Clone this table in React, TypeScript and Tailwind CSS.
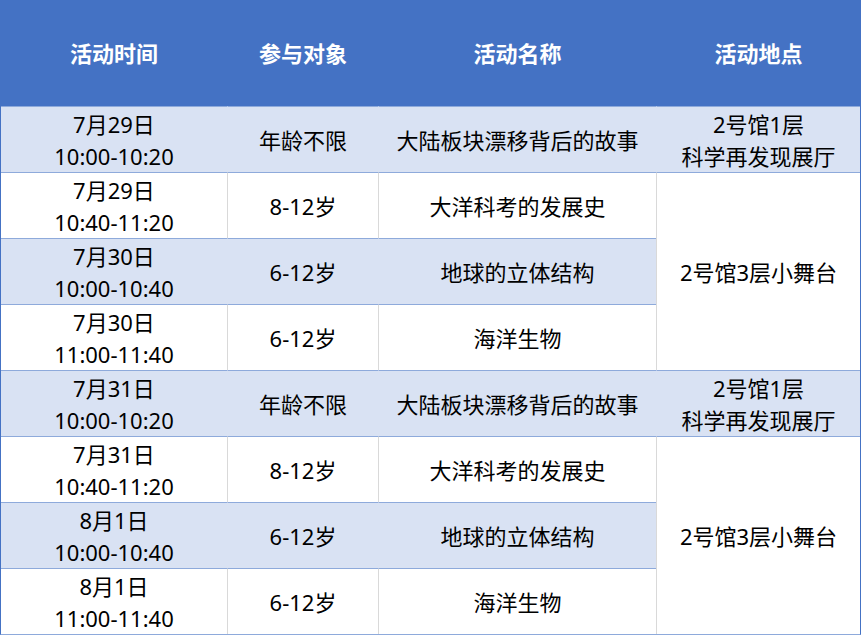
import React from "react";

type Row = {
  date: string;
  time: string;
  age: string;
  name: string;
  place?: string[];
  span?: number;
  blue: boolean;
};

const rows: Row[] = [
  { date: "7月29日", time: "10:00-10:20", age: "年龄不限", name: "大陆板块漂移背后的故事", place: ["2号馆1层", "科学再发现展厅"], span: 1, blue: true },
  { date: "7月29日", time: "10:40-11:20", age: "8-12岁", name: "大洋科考的发展史", place: ["2号馆3层小舞台"], span: 3, blue: false },
  { date: "7月30日", time: "10:00-10:40", age: "6-12岁", name: "地球的立体结构", blue: true },
  { date: "7月30日", time: "11:00-11:40", age: "6-12岁", name: "海洋生物", blue: false },
  { date: "7月31日", time: "10:00-10:20", age: "年龄不限", name: "大陆板块漂移背后的故事", place: ["2号馆1层", "科学再发现展厅"], span: 1, blue: true },
  { date: "7月31日", time: "10:40-11:20", age: "8-12岁", name: "大洋科考的发展史", place: ["2号馆3层小舞台"], span: 3, blue: false },
  { date: "8月1日", time: "10:00-10:40", age: "6-12岁", name: "地球的立体结构", blue: true },
  { date: "8月1日", time: "11:00-11:40", age: "6-12岁", name: "海洋生物", blue: false },
];

const font = { fontFamily: '"Noto Sans", "Noto Sans CJK SC", sans-serif' };

export default function App() {
  return (
    <div className="w-[861px] h-[635px] bg-white" style={font}>
      <div className="grid grid-cols-[226px_151px_278px_204px] grid-rows-[106px_repeat(8,66px)] border-l border-r border-b border-l-[#4472c4] border-r-[#4472c4] border-b-[#8eaadb] text-[22px] leading-[32px] text-black">
        {["活动时间", "参与对象", "活动名称", "活动地点"].map((h, i) => (
          <div
            key={h}
            className={
              "flex items-center justify-center bg-[#4472c4] font-bold text-white " +
              (i > 0 ? "border-l border-[#4472c4]" : "")
            }
          >
            {h}
          </div>
        ))}
        {rows.map((r, idx) => {
          const bg = r.blue ? "bg-[#d9e2f3]" : "bg-white";
          const vline = r.blue ? "border-l-[#d9e2f3]" : "border-l-[#d9d9d9]";
          return (
            <React.Fragment key={idx}>
              <div className={"flex flex-col items-center justify-center border-t border-t-[#8eaadb] " + bg}>
                <span>{r.date}</span>
                <span>{r.time}</span>
              </div>
              <div className={"flex items-center justify-center border-t border-t-[#8eaadb] border-l " + vline + " " + bg}>
                {r.age}
              </div>
              <div className={"flex items-center justify-center border-t border-t-[#8eaadb] border-l " + vline + " " + bg}>
                {r.name}
              </div>
              {r.place && (
                <div
                  className={
                    "flex flex-col items-center justify-center border-t border-t-[#8eaadb] border-l " +
                    (r.span === 3 ? "row-span-3 bg-white border-l-[#d9d9d9]" : "bg-[#d9e2f3] border-l-[#d9e2f3]")
                  }
                >
                  {r.place.map((p) => (
                    <span key={p}>{p}</span>
                  ))}
                </div>
              )}
            </React.Fragment>
          );
        })}
      </div>
    </div>
  );
}
